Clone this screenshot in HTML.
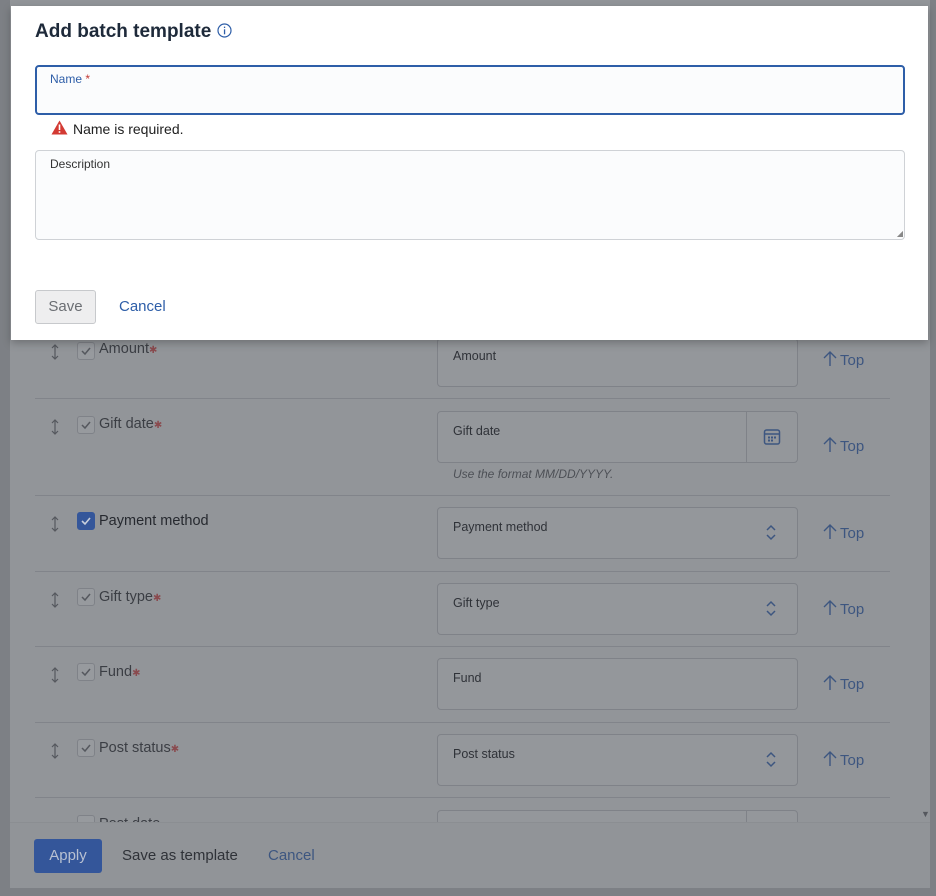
<!DOCTYPE html>
<html><head><style>
*{box-sizing:border-box;margin:0;padding:0}
body{width:936px;height:896px;background:#7d8085;font-family:"Liberation Sans",sans-serif;position:relative;overflow:hidden}
.panel{position:absolute;left:10px;top:0;width:920px;height:888px;background:#929599}
.row{position:absolute;left:35px;width:855px;border-bottom:1px solid #81848a}
.abs{position:absolute}
.hnd{left:15px}
.cb{left:42px;width:18px;height:18px;border:1px solid #7f8288;border-radius:3px;background:#979a9e}
.cb svg{position:absolute;left:2px;top:2px}
.lbl{left:64px;font-size:14.5px;color:#3b3e44}
.star{color:#8a4a4e;font-size:10px}
.inp{left:402px;width:361px;height:52px;border:1px solid #7f8288;border-radius:4px;background:#94979b}
.inp span{position:absolute;left:15px;top:12px;font-size:12.5px;color:#2f3238}
.top{left:788px;font-size:15px;color:#3d5680}
.top svg{vertical-align:-2px;margin-right:3px}
.footer{position:absolute;left:10px;top:822px;width:920px;height:66px;background:#919498;border-top:1px solid #8b8e92}
.modal{position:absolute;left:11px;top:6px;width:917px;height:334px;background:#fff;box-shadow:0 3px 8px rgba(0,0,0,.25)}
</style></head><body>
<div class="panel"></div>
<div class="abs" style="left:921px;top:809px;color:#55585e;font-size:9px">▼</div>

<!-- Amount -->
<div class="row" style="top:300px;height:99px">
 <svg class="abs hnd" style="top:44px" width="10" height="16" viewBox="0 0 10 16"><path d="M5 1v14M2 4l3-3 3 3M2 12l3 3 3-3" stroke="#55585e" stroke-width="1.2" fill="none"/></svg>
 <div class="abs cb" style="top:42px"><svg width="12" height="12" viewBox="0 0 12 12"><path d="M2 6l3 3 5-6" stroke="#55585e" stroke-width="1.5" fill="none"/></svg></div>
 <div class="abs lbl" style="top:41px">Amount<span class="star">✱</span></div>
 <div class="abs inp" style="top:38px;height:49px"><span style="top:10px">Amount</span></div>
 <div class="abs top" style="top:51px"><svg width="14" height="16" viewBox="0 0 14 16"><path d="M7 15V1M1 7l6-6 6 6" stroke="#3d5680" stroke-width="1.4" fill="none"/></svg>Top</div>
</div>
<!-- Gift date -->
<div class="row" style="top:399px;height:97px">
 <svg class="abs hnd" style="top:20px" width="10" height="16" viewBox="0 0 10 16"><path d="M5 1v14M2 4l3-3 3 3M2 12l3 3 3-3" stroke="#55585e" stroke-width="1.2" fill="none"/></svg>
 <div class="abs cb" style="top:17px"><svg width="12" height="12" viewBox="0 0 12 12"><path d="M2 6l3 3 5-6" stroke="#55585e" stroke-width="1.5" fill="none"/></svg></div>
 <div class="abs lbl" style="top:17px">Gift date<span class="star">✱</span></div>
 <div class="abs inp" style="top:12px"><span>Gift date</span>
  <div class="abs" style="left:308px;top:0;width:1px;height:50px;background:#7f8288"></div>
  <svg class="abs" style="left:325px;top:16px" width="18" height="18" viewBox="0 0 18 18"><rect x="1.5" y="2" width="15" height="14" rx="2" fill="none" stroke="#3d5680" stroke-width="1.5"/><line x1="1.5" y1="6" x2="16.5" y2="6" stroke="#3d5680" stroke-width="1.5"/><g fill="#3d5680"><rect x="5" y="8.5" width="2" height="2"/><rect x="8" y="8.5" width="2" height="2"/><rect x="11" y="8.5" width="2" height="2"/><rect x="5" y="11.5" width="2" height="2"/><rect x="8" y="11.5" width="2" height="2"/></g></svg>
 </div>
 <div class="abs" style="left:418px;top:68px;font-size:12px;font-style:italic;color:#4d5056">Use the format MM/DD/YYYY.</div>
 <div class="abs top" style="top:38px"><svg width="14" height="16" viewBox="0 0 14 16"><path d="M7 15V1M1 7l6-6 6 6" stroke="#3d5680" stroke-width="1.4" fill="none"/></svg>Top</div>
</div>
<!-- Payment method -->
<div class="row" style="top:496px;height:76px">
 <svg class="abs hnd" style="top:20px" width="10" height="16" viewBox="0 0 10 16"><path d="M5 1v14M2 4l3-3 3 3M2 12l3 3 3-3" stroke="#55585e" stroke-width="1.2" fill="none"/></svg>
 <div class="abs cb" style="top:16px;background:#34569a;border-color:#34569a"><svg width="12" height="12" viewBox="0 0 12 12"><path d="M2 6l3 3 5-6" stroke="#c8cfdc" stroke-width="1.6" fill="none"/></svg></div>
 <div class="abs lbl" style="top:17px;color:#26292f">Payment method</div>
 <div class="abs inp" style="top:11px"><span>Payment method</span><svg class="abs" style="left:327px;top:16px" width="12" height="17" viewBox="0 0 12 17"><path d="M2 6l4-4 4 4M2 11l4 4 4-4" stroke="#3d5680" stroke-width="1.5" fill="none"/></svg></div>
 <div class="abs top" style="top:28px"><svg width="14" height="16" viewBox="0 0 14 16"><path d="M7 15V1M1 7l6-6 6 6" stroke="#3d5680" stroke-width="1.4" fill="none"/></svg>Top</div>
</div>
<!-- Gift type -->
<div class="row" style="top:572px;height:75px">
 <svg class="abs hnd" style="top:20px" width="10" height="16" viewBox="0 0 10 16"><path d="M5 1v14M2 4l3-3 3 3M2 12l3 3 3-3" stroke="#55585e" stroke-width="1.2" fill="none"/></svg>
 <div class="abs cb" style="top:16px"><svg width="12" height="12" viewBox="0 0 12 12"><path d="M2 6l3 3 5-6" stroke="#55585e" stroke-width="1.5" fill="none"/></svg></div>
 <div class="abs lbl" style="top:17px">Gift type<span class="star">✱</span></div>
 <div class="abs inp" style="top:11px"><span>Gift type</span><svg class="abs" style="left:327px;top:16px" width="12" height="17" viewBox="0 0 12 17"><path d="M2 6l4-4 4 4M2 11l4 4 4-4" stroke="#3d5680" stroke-width="1.5" fill="none"/></svg></div>
 <div class="abs top" style="top:28px"><svg width="14" height="16" viewBox="0 0 14 16"><path d="M7 15V1M1 7l6-6 6 6" stroke="#3d5680" stroke-width="1.4" fill="none"/></svg>Top</div>
</div>
<!-- Fund -->
<div class="row" style="top:647px;height:76px">
 <svg class="abs hnd" style="top:20px" width="10" height="16" viewBox="0 0 10 16"><path d="M5 1v14M2 4l3-3 3 3M2 12l3 3 3-3" stroke="#55585e" stroke-width="1.2" fill="none"/></svg>
 <div class="abs cb" style="top:16px"><svg width="12" height="12" viewBox="0 0 12 12"><path d="M2 6l3 3 5-6" stroke="#55585e" stroke-width="1.5" fill="none"/></svg></div>
 <div class="abs lbl" style="top:17px">Fund<span class="star">✱</span></div>
 <div class="abs inp" style="top:11px"><span>Fund</span></div>
 <div class="abs top" style="top:28px"><svg width="14" height="16" viewBox="0 0 14 16"><path d="M7 15V1M1 7l6-6 6 6" stroke="#3d5680" stroke-width="1.4" fill="none"/></svg>Top</div>
</div>
<!-- Post status -->
<div class="row" style="top:723px;height:75px">
 <svg class="abs hnd" style="top:20px" width="10" height="16" viewBox="0 0 10 16"><path d="M5 1v14M2 4l3-3 3 3M2 12l3 3 3-3" stroke="#55585e" stroke-width="1.2" fill="none"/></svg>
 <div class="abs cb" style="top:16px"><svg width="12" height="12" viewBox="0 0 12 12"><path d="M2 6l3 3 5-6" stroke="#55585e" stroke-width="1.5" fill="none"/></svg></div>
 <div class="abs lbl" style="top:17px">Post status<span class="star">✱</span></div>
 <div class="abs inp" style="top:11px"><span>Post status</span><svg class="abs" style="left:327px;top:16px" width="12" height="17" viewBox="0 0 12 17"><path d="M2 6l4-4 4 4M2 11l4 4 4-4" stroke="#3d5680" stroke-width="1.5" fill="none"/></svg></div>
 <div class="abs top" style="top:28px"><svg width="14" height="16" viewBox="0 0 14 16"><path d="M7 15V1M1 7l6-6 6 6" stroke="#3d5680" stroke-width="1.4" fill="none"/></svg>Top</div>
</div>
<div class="abs inp" style="left:437px;top:810px;width:361px;border-color:#7f8288"><div class="abs" style="left:308px;top:0;width:1px;height:50px;background:#7f8288"></div></div>
<div class="abs cb" style="left:77px;top:815px"></div>
<div class="abs lbl" style="left:99px;top:816px">Post date</div>

<div class="footer">
 <div class="abs" style="left:24px;top:16px;width:68px;height:34px;background:#34569a;border-radius:3px;color:#b8c1d2;font-size:15px;text-align:center;line-height:34px">Apply</div>
 <div class="abs" style="left:112px;top:24px;font-size:15px;color:#2f3238">Save as template</div>
 <div class="abs" style="left:258px;top:24px;font-size:15px;color:#3d5680">Cancel</div>
</div>

<div class="modal">
 <div class="abs" style="left:24px;top:15px;font-size:19px;font-weight:bold;color:#1e2a3a">Add batch template <svg style="vertical-align:-1px" width="15" height="15" viewBox="0 0 15 15"><circle cx="7.5" cy="7.5" r="6.5" fill="none" stroke="#2e5ea8" stroke-width="1.2"/><rect x="6.9" y="6.3" width="1.3" height="5" fill="#2e5ea8"/><rect x="6.9" y="3.6" width="1.3" height="1.4" fill="#2e5ea8"/></svg></div>
 <div class="abs" style="left:24px;top:59px;width:870px;height:50px;border:2px solid #2e5ea8;border-radius:4px;background:#fbfcfd">
  <div class="abs" style="left:13px;top:5px;font-size:12px;color:#2e5ea8">Name <span style="color:#c23934">*</span></div>
 </div>
 <svg class="abs" style="left:40px;top:114px" width="17" height="15" viewBox="0 0 17 15"><path d="M8.5 0.5L16.5 14.5H0.5Z" fill="#d33a33"/><rect x="7.7" y="4.5" width="1.6" height="5.5" fill="#fff"/><rect x="7.7" y="11.2" width="1.6" height="1.6" fill="#fff"/></svg>
 <div class="abs" style="left:62px;top:115px;font-size:14px;color:#212121">Name is required.</div>
 <div class="abs" style="left:24px;top:144px;width:870px;height:90px;border:1px solid #cfd2d6;border-radius:4px;background:#fbfcfd">
  <div class="abs" style="left:14px;top:6px;font-size:12px;color:#333">Description</div>
  <div class="abs" style="right:1px;bottom:1px;font-size:8px;color:#888">◢</div>
 </div>
 <div class="abs" style="left:24px;top:284px;width:61px;height:34px;border:1px solid #c7c9cc;border-radius:3px;background:#eeeeef;color:#6b6e73;font-size:15px;text-align:center;line-height:32px">Save</div>
 <div class="abs" style="left:108px;top:292px;font-size:15px;color:#2e5ea8">Cancel</div>
</div>
</body></html>
